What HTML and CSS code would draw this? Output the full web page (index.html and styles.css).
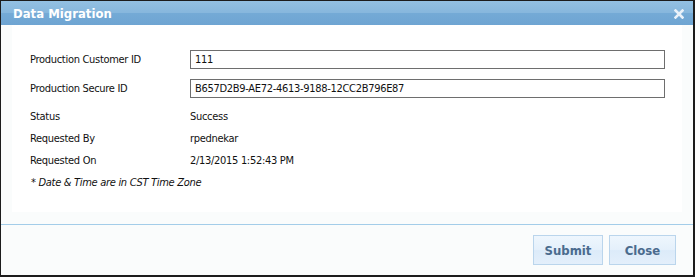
FILE: index.html
```html
<!DOCTYPE html>
<html lang="en">
<head>
  <meta charset="UTF-8" />
  <meta name="viewport" content="width=device-width, initial-scale=1.0" />
  <title>Data Migration</title>
  <link rel="stylesheet" href="styles.css">
</head>
<body>
  <div class="dialog">
    <div class="titlebar">
      <span class="title">Data Migration</span>
      <span class="close-x">
        <svg width="10" height="10" viewBox="0 0 10 10">
          <path d="M1.5 1.5 L8.5 8.5 M8.5 1.5 L1.5 8.5" stroke="#e9f1f9" stroke-width="2.6" stroke-linecap="square" />
        </svg>
      </span>
    </div>

    <div class="panel">
      <div class="row input-row">
        <label class="label">Production Customer ID</label>
        <input class="field" type="text" value="111">
      </div>
      <div class="row input-row">
        <label class="label">Production Secure ID</label>
        <input class="field" type="text" value="B657D2B9-AE72-4613-9188-12CC2B796E87">
      </div>
      <div class="row text-row first">
        <span class="label">Status</span>
        <span class="value">Success</span>
      </div>
      <div class="row text-row">
        <span class="label">Requested By</span>
        <span class="value">rpednekar</span>
      </div>
      <div class="row text-row">
        <span class="label">Requested On</span>
        <span class="value">2/13/2015 1:52:43 PM</span>
      </div>
      <div class="note">* Date &amp; Time are in CST Time Zone</div>
    </div>

    <div class="footer">
      <button class="btn" type="button">Submit</button>
      <button class="btn" type="button">Close</button>
    </div>
  </div>
</body>
</html>
```

FILE: styles.css
```css
body {
  margin: 0;
  padding: 0;
  font-family: "DejaVu Sans Condensed", "Liberation Sans", sans-serif;
  font-size: 11px;
  letter-spacing: -0.3px;
  color: #111;
  background: #fff;
}
.dialog {
  box-sizing: border-box;
  width: 695px;
  height: 277px;
  border-style: solid;
  border-color: #1c1c1c;
  border-width: 1px 2px 2px 1px;
  background: #fafcfc;
  display: flex;
  flex-direction: column;
}
.titlebar {
  height: 24px;
  flex: none;
  display: flex;
  align-items: center;
  justify-content: space-between;
  padding: 0 9px 0 12px;
  background: linear-gradient(#93c0e2, #87b7dd 48%, #74aad6 52%, #6ea4d2);
}
.title {
  color: #fff;
  font-weight: bold;
  font-size: 13px;
  letter-spacing: 0;
}
.close-x {
  display: flex;
  margin-top: 1px;
}
.panel {
  margin: 0 11px;
  padding: 25px 17px 0 18px;
  height: 162px;
  background: #fff;
}
.row {
  display: flex;
  align-items: center;
}
.label {
  width: 160px;
  flex: none;
}
.input-row {
  margin-bottom: 10px;
}
.field {
  flex: 1;
  box-sizing: border-box;
  height: 19px;
  margin: 0;
  padding: 0 4px;
  border: 1px solid #6e6e6e;
  font-family: inherit;
  font-size: 11px;
  letter-spacing: inherit;
  color: #111;
  outline: none;
}
.text-row {
  height: 22px;
}
.text-row.first {
  margin-top: -3px;
}
.note {
  height: 23px;
  line-height: 23px;
  font-style: italic;
  padding-left: 1px;
}
.footer {
  margin-top: 12px;
  border-top: 1px solid #a3cde9;
  padding: 10px 17px 0 0;
  display: flex;
  justify-content: flex-end;
  gap: 6px;
}
.btn {
  height: 30px;
  padding: 0;
  border: 1px solid #bad5ec;
  background: linear-gradient(#eef6fd, #e4f0fb 50%, #dcebf9 52%, #e3effb);
  color: #4a6b8e;
  font-family: inherit;
  font-weight: bold;
  font-size: 13px;
  letter-spacing: 0;
  cursor: pointer;
}
.btn:first-child {
  width: 70px;
}
.btn:last-child {
  width: 67px;
}
```
